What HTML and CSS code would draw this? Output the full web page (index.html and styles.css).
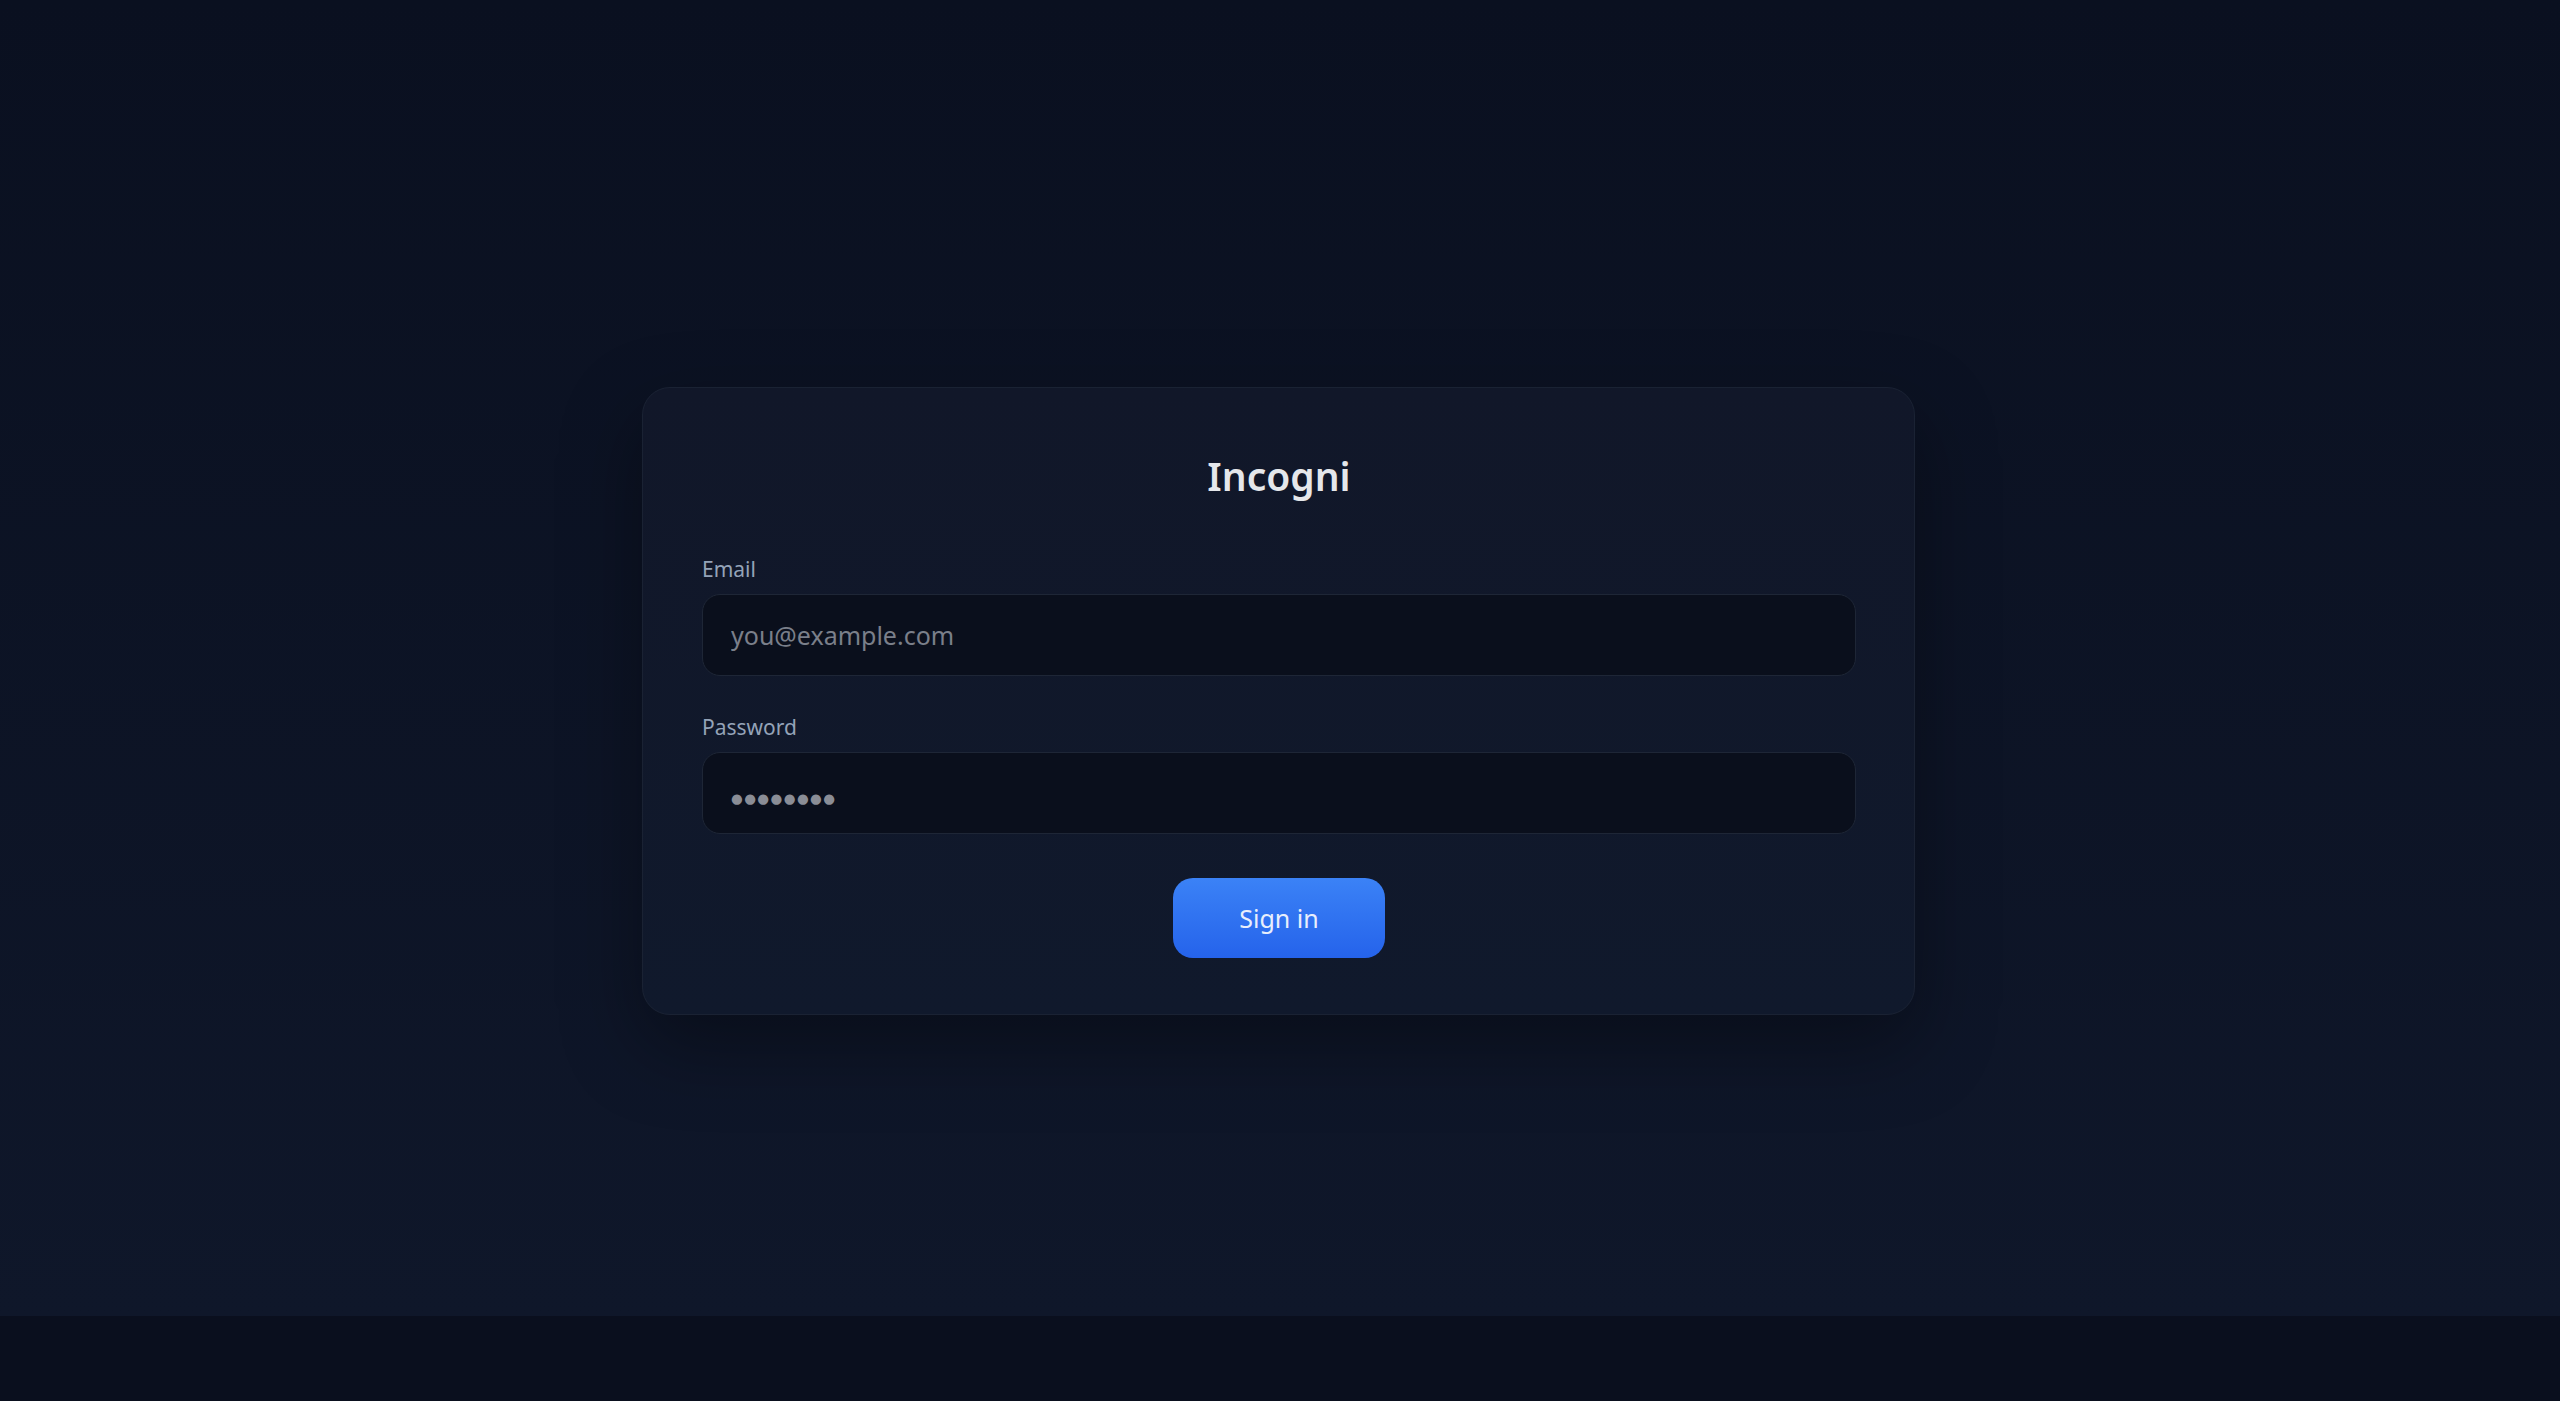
FILE: index.html
```html
<!DOCTYPE html>
<html lang="en">
<head>
<meta charset="utf-8">
<title>Incogni</title>
<link rel="stylesheet" href="styles.css">
</head>
<body>
<main class="screen">
  <form class="card" onsubmit="return false">
    <h1 class="title">Incogni</h1>
    <label class="field">
      <span class="label">Email</span>
      <input class="input" type="email" placeholder="you@example.com">
    </label>
    <label class="field">
      <span class="label">Password</span>
      <input class="input input-password" type="password" placeholder="●●●●●●●●">
    </label>
    <div class="actions">
      <button class="btn" type="submit">Sign in</button>
    </div>
  </form>
</main>
</body>
</html>
```

FILE: styles.css
```css
html, body {
  margin: 0;
  padding: 0;
  background: #0a0f1e;
  font-family: "Noto Sans", "Open Sans", "Liberation Sans", sans-serif;
}

.screen {
  height: 100vh;
  display: flex;
  align-items: center;
  justify-content: center;
  padding-right: 3px;
  box-sizing: border-box;
  background: linear-gradient(180deg, #0a1020 0px, #0f172a 1316px, #0a0f1e 1316px, #0a0f1e 100%);
}

.card {
  width: 1273px;
  box-sizing: border-box;
  padding: 62px 58px 56px 59px;
  background: linear-gradient(180deg, #111729 0%, #10192c 100%);
  border: 1px solid #1a2233;
  border-radius: 28px;
  box-shadow: 0 30px 80px rgba(0, 0, 0, 0.35);
  display: flex;
  flex-direction: column;
}

.title {
  margin: 0 0 55px;
  text-align: center;
  font-size: 39px;
  font-weight: 600;
  line-height: 52px;
  color: #e5e7eb;
}

.field {
  display: flex;
  flex-direction: column;
  gap: 13px;
  margin-bottom: 39px;
}

.label {
  font-size: 21px;
  line-height: 24px;
  color: #94a3b8;
}

.input {
  height: 82px;
  box-sizing: border-box;
  border: 1px solid #1e2636;
  border-radius: 18px;
  background: #0a0f1c;
  padding: 0 28px;
  font-family: inherit;
  font-size: 25px;
  color: #e5e7eb;
  outline: none;
}

.input::placeholder {
  color: #7a7f8a;
}

.input-password::placeholder {
  font-family: "DejaVu Sans", sans-serif;
  font-size: 13.5px;
  letter-spacing: 1.4px;
  color: #8a8d96;
}

.actions {
  display: flex;
  justify-content: center;
  padding-top: 5px;
}

.btn {
  width: 212px;
  height: 80px;
  border: none;
  border-radius: 20px;
  background: linear-gradient(180deg, #3b82f6 0%, #2563eb 100%);
  color: #e8eefc;
  font-family: inherit;
  font-size: 25px;
  cursor: pointer;
}
```
